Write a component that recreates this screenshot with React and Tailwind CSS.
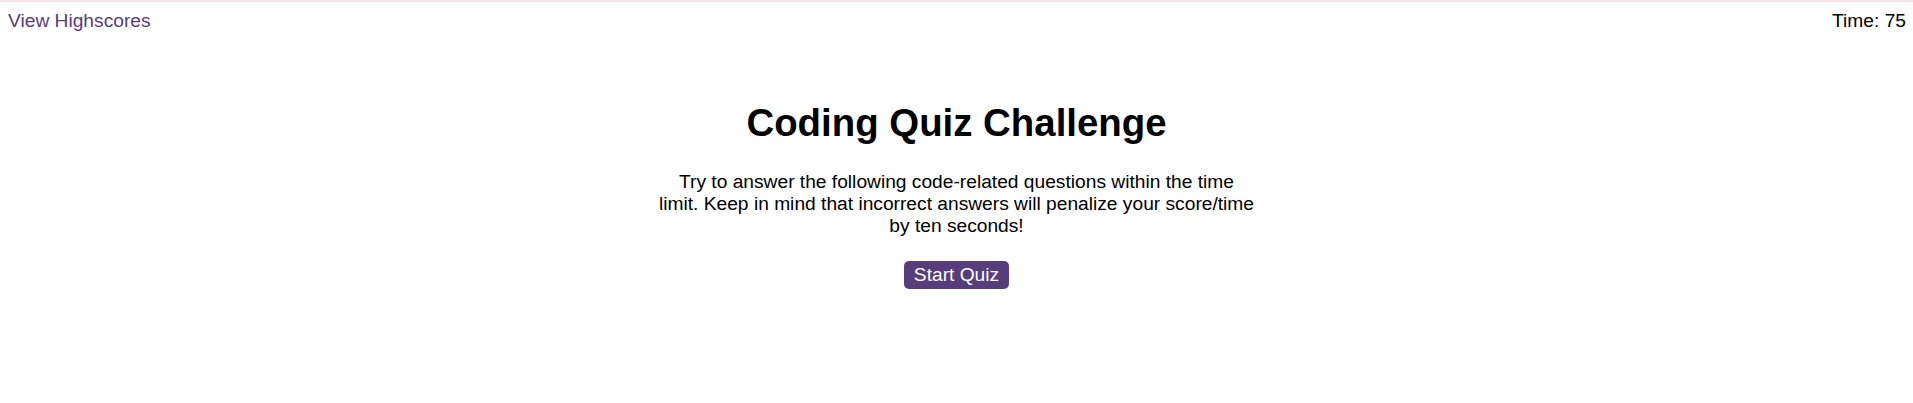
export default function App() {
  return (
    <div className="min-h-screen bg-white border-t-[2px] border-[#f3e4ea] font-['Liberation_Sans',Arial,sans-serif] text-[19.2px] leading-[normal] text-black">
      {/* header */}
      <header className="flex items-start justify-between pl-2 pr-[7px] pt-[8px]">
        <a href="#" className="text-[#563d7c]">
          View Highscores
        </a>
        <div>Time: 75</div>
      </header>

      {/* intro */}
      <main className="flex flex-col items-center mt-[69px]">
        <h1 className="text-[38.4px] font-bold leading-[normal]">Coding Quiz Challenge</h1>
        <p className="mt-[26px] w-[597px] text-center leading-[normal]">
          Try to answer the following code-related questions within the time limit. Keep in mind
          that incorrect answers will penalize your score/time by ten seconds!
        </p>
        <button className="mt-[24px] bg-[#563d7c] text-white px-[10px] py-[3px] rounded-[5px] leading-[normal]">
          Start Quiz
        </button>
      </main>
    </div>
  );
}
